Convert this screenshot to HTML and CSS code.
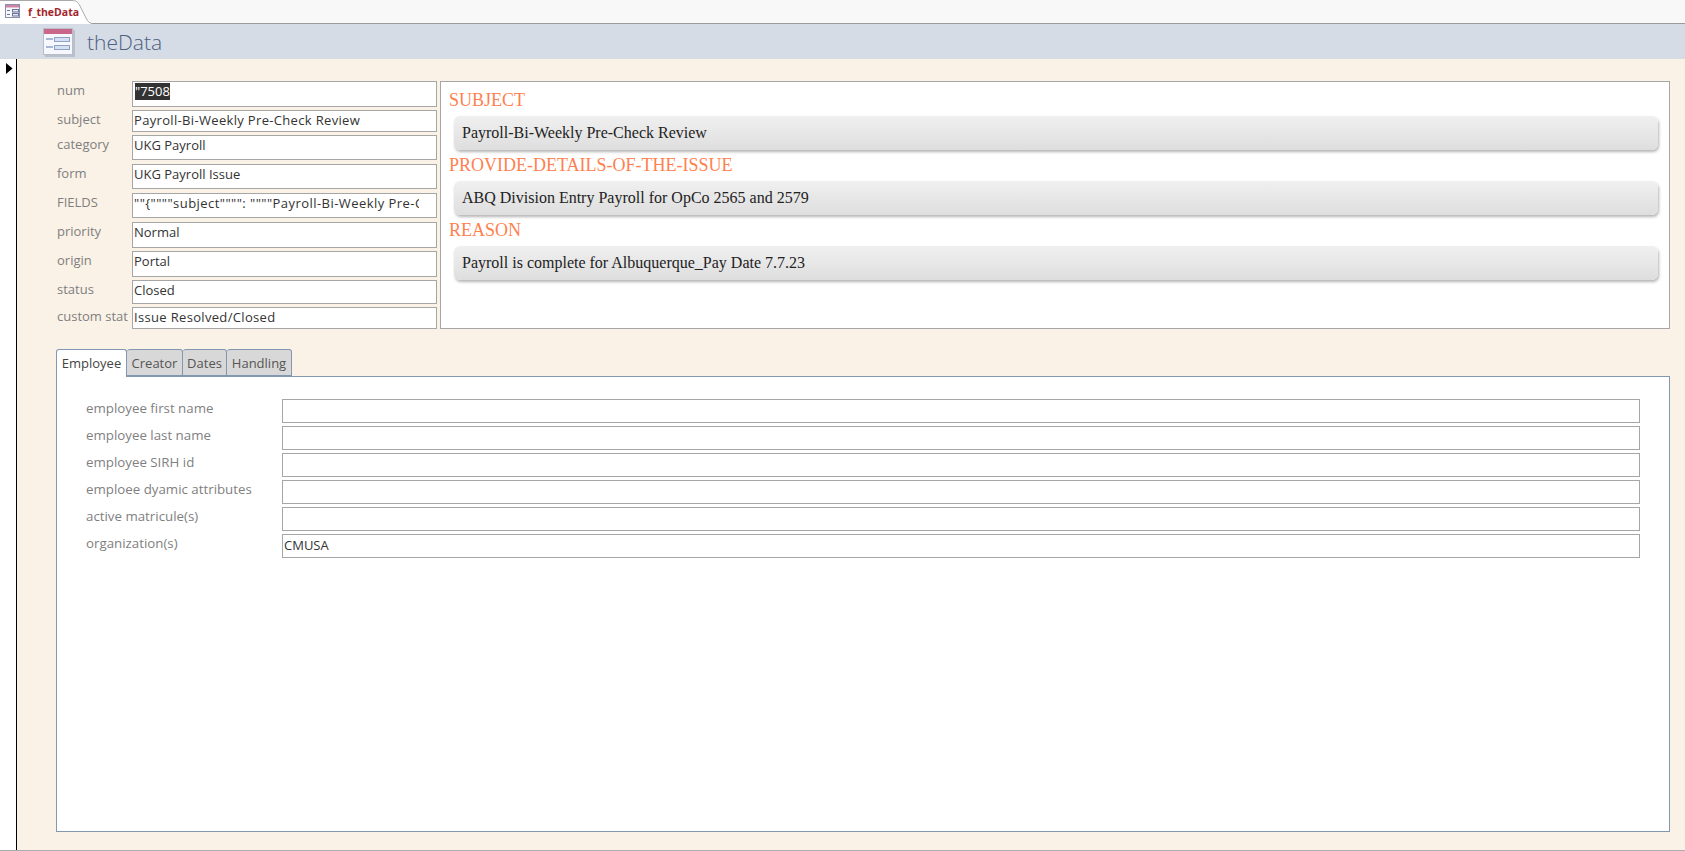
FILE: index.html
```html
<!DOCTYPE html>
<html lang="en">
<head>
<meta charset="utf-8">
<title>f_theData</title>
<link rel="stylesheet" href="styles.css">
</head>
<body>
<div class="doc-tabs">
  <div class="doc-tab">
    <svg class="doc-tab-shape" width="92" height="24" viewBox="0 0 92 24"><path d="M0 .5H72C76 .5 78 2 80 6L86 18C88 21.500 89 23 92 23.500V24H0Z" fill="#fff"/><path d="M0 .5H72C76 .5 78 2 80 6L86 18C88 21.500 89 23 92 23.500" fill="none" stroke="#a9a9a9"/></svg>
    <svg class="doc-tab-icon" width="16" height="15" viewBox="0 0 16 15"><rect x=".5" y=".5" width="14" height="13" fill="#f6f8fd" stroke="#8a90aa"/><rect x="1" y="1" width="13" height="2.500" fill="#cf86a4"/><path d="M2 6.500H5M2 10.500H5" stroke="#6b7396"/><rect x="7.500" y="5.500" width="6" height="2.500" fill="#e4ecf8" stroke="#6b7396"/><rect x="7.500" y="9.500" width="6" height="2.500" fill="#e4ecf8" stroke="#6b7396"/></svg>
    <span class="doc-tab-label">f_theData</span>
  </div>
</div>
<header class="form-header">
  <svg class="form-icon" width="32" height="29" viewBox="0 0 32 29"><rect x="2" y="2" width="30" height="27" fill="#9aa0ad" opacity=".45"/><rect x=".5" y=".5" width="29" height="26" fill="#f6f8fd" stroke="#b9bdc9"/><rect x="1" y="1" width="28" height="5" fill="#c9678b"/><path d="M3 11H10M3 19H10" stroke="#8ea3c6" stroke-width="1.500"/><rect x="11.500" y="9.500" width="15" height="4" fill="#d5e1f2" stroke="#8ea3c6"/><rect x="11.500" y="17.500" width="15" height="4" fill="#d5e1f2" stroke="#8ea3c6"/></svg>
  <h1 class="form-title">theData</h1>
</header>
<div class="form-body">
  <aside class="selector"><svg class="selector-arrow" width="7" height="11" viewBox="0 0 7 11"><path d="M0 0L6.500 5.500L0 11Z" fill="#000"/></svg></aside>
  <main class="detail">
    <section class="top">
      <div class="fields">
        <label class="lbl">num</label>
        <div class="box r-num"><span class="selected">"7508</span></div>
        <label class="lbl">subject</label>
        <div class="box r-sub wide">Payroll-Bi-Weekly Pre-Check Review</div>
        <label class="lbl">category</label>
        <div class="box r-cat">UKG Payroll</div>
        <label class="lbl push">form</label>
        <div class="box r-cat push">UKG Payroll Issue</div>
        <label class="lbl push">FIELDS</label>
        <div class="box r-cat push wider"><span class="clip">""{""""subject"""": """"Payroll-Bi-Weekly Pre-Check</span></div>
        <label class="lbl push">priority</label>
        <div class="box r-pri push">Normal</div>
        <label class="lbl">origin</label>
        <div class="box r-pri">Portal</div>
        <label class="lbl">status</label>
        <div class="box r-sta">Closed</div>
        <label class="lbl">custom stat</label>
        <div class="box r-cus wide">Issue Resolved/Closed</div>
      </div>
      <div class="preview">
        <h2 class="pv-head">SUBJECT</h2>
        <div class="pv-card">Payroll-Bi-Weekly Pre-Check Review</div>
        <h2 class="pv-head">PROVIDE-DETAILS-OF-THE-ISSUE</h2>
        <div class="pv-card">ABQ Division Entry Payroll for OpCo 2565 and 2579</div>
        <h2 class="pv-head">REASON</h2>
        <div class="pv-card">Payroll is complete for Albuquerque_Pay Date 7.7.23</div>
      </div>
    </section>
    <section class="tabs">
      <nav class="tab-strip">
        <div class="tab tab-active t-emp">Employee</div>
        <div class="tab t-cre">Creator</div>
        <div class="tab t-dat">Dates</div>
        <div class="tab t-han">Handling</div>
      </nav>
      <div class="tab-panel">
        <label class="plbl">employee first name</label><div class="pbox"></div>
        <label class="plbl">employee last name</label><div class="pbox"></div>
        <label class="plbl">employee SIRH id</label><div class="pbox"></div>
        <label class="plbl">emploee dyamic attributes</label><div class="pbox"></div>
        <label class="plbl">active matricule(s)</label><div class="pbox"></div>
        <label class="plbl">organization(s)</label><div class="pbox">CMUSA</div>
      </div>
    </section>
  </main>
</div>
</body>
</html>
```

FILE: styles.css
```css
* { box-sizing: border-box; }
html, body { margin: 0; height: 851px; overflow: hidden; }
body {
  display: flex;
  flex-direction: column;
  font-family: "Open Sans", "Noto Sans", sans-serif;
  font-size: 13px;
  color: #333;
  background: #fff;
}
.doc-tabs {
  height: 24px;
  flex: none;
  background: #f8f8f8;
  border-bottom: 1px solid #9b9b9b;
}
.doc-tab {
  position: relative;
  width: 92px;
  height: 24px;
  display: flex;
  align-items: center;
  padding: 0 0 1px 5px;
}
.doc-tab-shape { position: absolute; left: 0; top: 0; }
.doc-tab-icon { position: relative; margin-right: 7px; }
.doc-tab-label {
  position: relative;
  font-size: 10.5px;
  font-weight: 700;
  color: #a4262c;
}
.form-header {
  height: 35px;
  flex: none;
  background: #d5dce6;
  display: flex;
  align-items: center;
  padding-left: 43px;
}
.form-icon { flex: none; margin-top: 2px; }
.form-title {
  margin: 0 0 0 12px;
  font-size: 21px;
  font-weight: 300;
  color: #4c6080;
}
.form-body {
  flex: 1;
  display: flex;
  border-bottom: 1px solid #abadb3;
}
.selector {
  width: 17px;
  flex: none;
  background: #fff;
  border-right: 1px solid #000;
  padding: 4px 0 0 6px;
}
.selector-arrow { display: block; }
.detail {
  flex: 1;
  background: #faf2e7;
  padding: 22px 0 0 40px;
}
.top { display: flex; gap: 3px; height: 248px; }
.fields {
  width: 380px;
  display: grid;
  grid-template-columns: 75px 305px;
  row-gap: 3px;
  align-content: start;
}
.lbl {
  color: #7f7f7f;
  font-size: 13px;
  line-height: 18px;
}
.push { margin-top: 1px; }
.wide { letter-spacing: .33px; }
.wider { letter-spacing: .45px; }
.box {
  background: #fff;
  border: 1px solid #a6a6a6;
  padding: 0 1px;
  line-height: 18px;
  overflow: hidden;
  white-space: nowrap;
}
.r-num { height: 26px; }
.r-sub { height: 22px; }
.r-cat { height: 25px; }
.r-pri { height: 26px; }
.r-sta { height: 24px; }
.r-cus { height: 22px; }
.selected {
  display: inline-block;
  background: #333;
  color: #fff;
  height: 17px;
  line-height: 17px;
  margin: 1px 0 0 1px;
}
.clip { display: block; width: 285px; overflow: hidden; }
.preview {
  width: 1230px;
  height: 248px;
  background: #fff;
  border: 1px solid #a6a6a6;
  padding: 7px 11px 0 8px;
  font-family: "Liberation Serif", serif;
}
.pv-head {
  margin: 0;
  font-size: 18px;
  font-weight: 400;
  line-height: 22px;
  height: 24px;
  color: #ff7f50;
}
.pv-card {
  height: 34px;
  margin: 3px 0 4px 5px;
  padding-left: 8px;
  font-size: 16px;
  line-height: 34px;
  color: #222;
  border-radius: 6px;
  background: linear-gradient(#f0f0f0, #dedede);
  box-shadow: 1px 2px 3px #b5b5b5;
}
.tabs { margin: 20px 0 0 -1px; }
.tab-strip { display: flex; height: 28px; position: relative; }
.tab {
  height: 27px;
  background: #d8d8d8;
  border: 1px solid #8497b0;
  border-left-width: 0;
  border-radius: 3px 3px 0 0;
  font-size: 13px;
  line-height: 27px;
  color: #555;
  text-align: center;
}
.tab-active {
  height: 28px;
  background: #fff;
  border-left-width: 1px;
  border-bottom: 0;
  position: relative;
  z-index: 1;
  color: #444;
}
.t-emp { width: 71px; }
.t-cre { width: 56px; }
.t-dat { width: 44px; }
.t-han { width: 65px; }
.tab-panel {
  width: 1614px;
  height: 456px;
  margin-top: -1px;
  background: #fff;
  border: 1px solid #8497b0;
  padding: 22px 0 0 29px;
  display: grid;
  grid-template-columns: 196px 1358px;
  grid-auto-rows: 24px;
  row-gap: 3px;
  align-content: start;
}
.plbl { color: #7f7f7f; font-size: 13.3px; line-height: 18px; }
.pbox {
  height: 24px;
  border: 1px solid #a6a6a6;
  background: #fff;
  padding: 0 1px;
  line-height: 20px;
}
```
